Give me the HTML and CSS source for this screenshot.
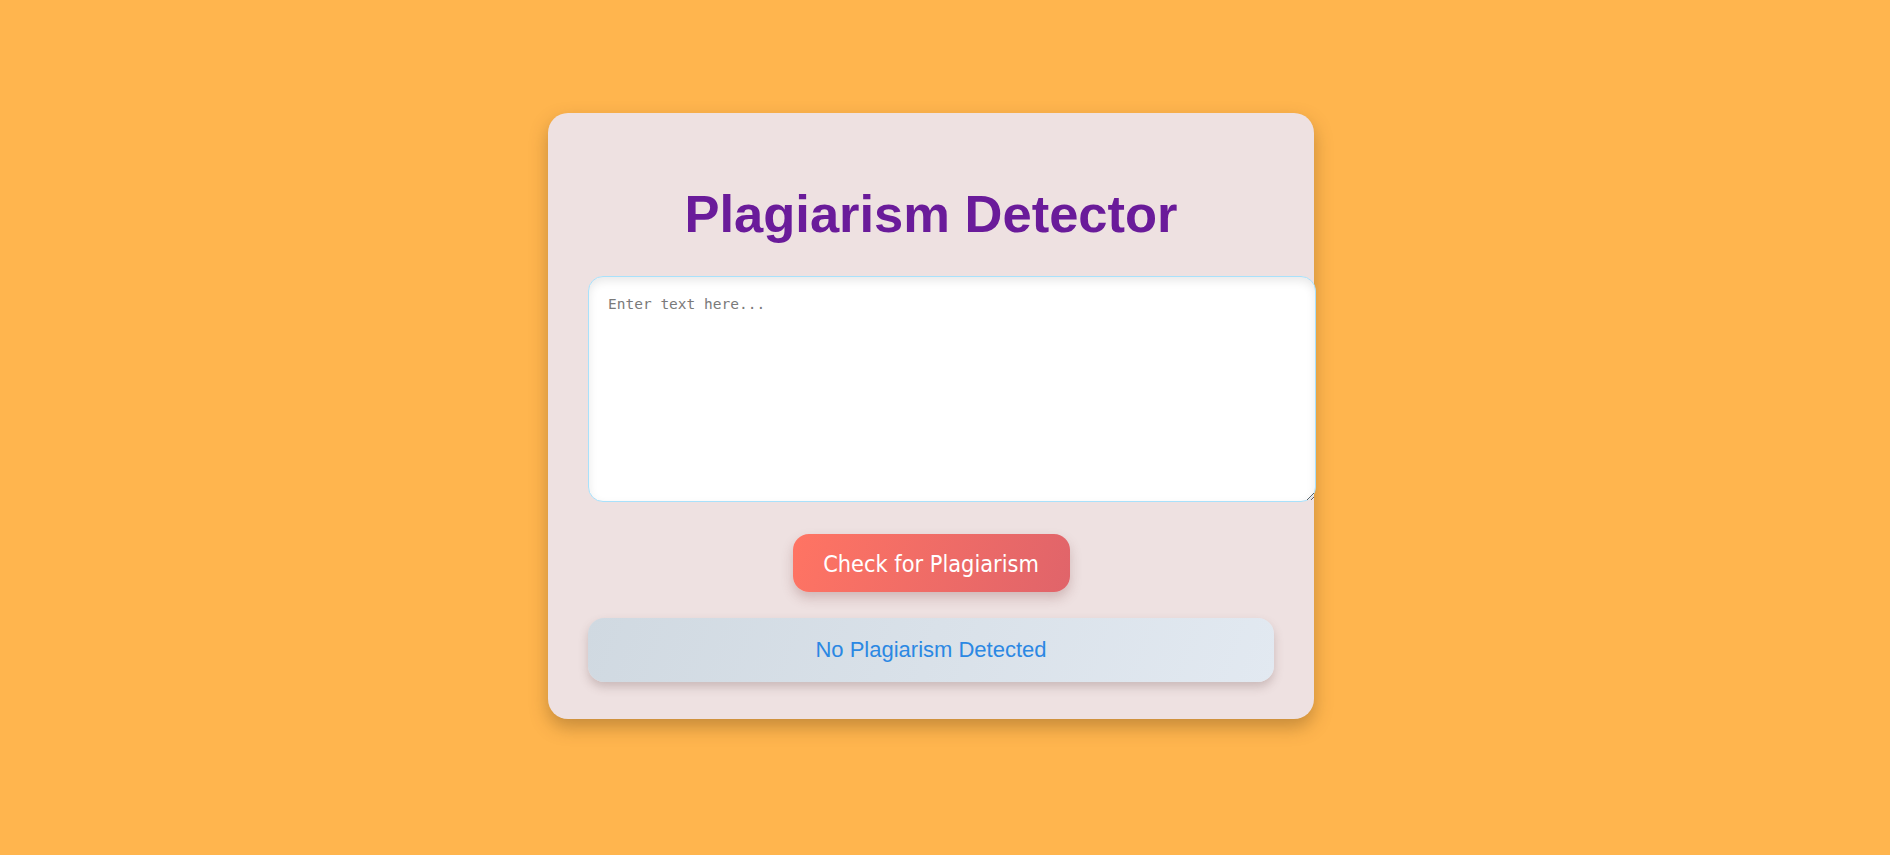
FILE: index.html
```html
<!DOCTYPE html>
<html lang="en">
<head>
<meta charset="utf-8">
<title>Plagiarism Detector</title>
<link rel="stylesheet" href="styles.css">
</head>
<body>
  <div class="card">
    <h1 class="title">Plagiarism Detector</h1>
    <textarea class="input" placeholder="Enter text here..."></textarea>
    <button class="check-btn">Check for Plagiarism</button>
    <div class="result">No Plagiarism Detected</div>
  </div>
</body>
</html>
```

FILE: styles.css
```css
html, body {
  margin: 0;
  padding: 0;
}

body {
  background: #ffb54e;
  height: 855px;
  display: flex;
  justify-content: center;
  align-items: flex-start;
  padding-right: 28px;
  box-sizing: border-box;
  font-family: "Liberation Sans", Arial, sans-serif;
}

.card {
  margin-top: 113px;
  width: 686px;
  padding: 40px 40px 37px;
  background: #eee1e1;
  border-radius: 20px;
  box-shadow: 0 8px 18px rgba(90, 60, 20, 0.35);
}

.title {
  margin: 30px 0 32px;
  font-family: "Liberation Sans", Arial, sans-serif;
  font-weight: bold;
  font-size: 52.5px;
  line-height: normal;
  color: #6a1b9a;
  text-align: center;
}

.input {
  display: block;
  width: 688px;
  height: 186px;
  margin: 0 0 32px;
  padding: 19px;
  border: 1px solid #a9e1fb;
  border-radius: 15px;
  background: #ffffff;
  box-shadow: inset 0 4px 10px rgba(0, 0, 0, 0.09);
  font-family: "DejaVu Sans Mono", "Liberation Mono", monospace;
  font-size: 14.5px;
  color: #333;
  outline: none;
}

.input::placeholder {
  color: #7a7a7a;
}

.check-btn {
  display: block;
  margin: 0 auto 26px;
  width: 277px;
  height: 58px;
  border: none;
  border-radius: 16px;
  background: linear-gradient(110deg, #ff7463 0%, #e0646a 100%);
  box-shadow: 0 6px 12px rgba(120, 60, 60, 0.25);
  color: #ffffff;
  font-family: "DejaVu Sans Condensed", "DejaVu Sans", sans-serif;
  font-size: 23.3px;
  padding: 0;
}

.result {
  height: 64px;
  display: flex;
  align-items: center;
  justify-content: center;
  border-radius: 16px;
  background: linear-gradient(110deg, #d0d9e1 0%, #e2e9f1 100%);
  box-shadow: 0 5px 10px rgba(100, 70, 70, 0.25);
  color: #2b88e3;
  font-family: "Liberation Sans", Arial, sans-serif;
  font-size: 22px;
}
```
